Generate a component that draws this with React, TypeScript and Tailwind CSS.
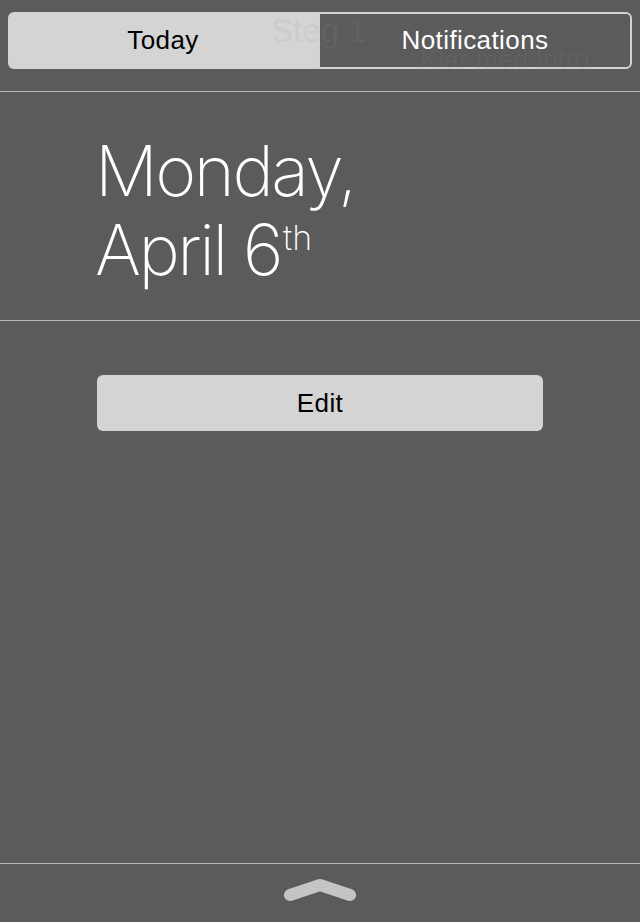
export default function App() {
    return (
        <div className="w-[640px] h-[922px] bg-[#5b5b5b] flex flex-col font-['Liberation_Sans',Arial,sans-serif] overflow-hidden">
            {/* segmented control */}
            <div className="relative px-2 pt-3 h-[91px]">
                <div className="flex h-[57px]">
                    <div className="flex-1 bg-[#d4d4d4] rounded-l-[6px] flex items-center justify-center text-[26px] tracking-[0.4px] text-black">
                        Today
                    </div>
                    <div className="flex-1 border-2 border-[#d2d2d2] rounded-r-[6px] flex items-center justify-center text-[26px] tracking-[0.4px] text-white">
                        Notifications
                    </div>
                </div>
                {/* blurred content showing through */}
                <div className="absolute left-[271px] top-[6px] text-[33px] text-[#999999]/15 pointer-events-none">Steg 1</div>
                <div className="absolute left-[420px] top-[40px] text-[27px] text-[#9a9a9a]/10 pointer-events-none">Klar med Intro</div>
            </div>
            <div className="h-px bg-[#b4b4b4]" />

            {/* date */}
            <div className="h-[228px] pl-[95px] pt-[39px] text-white font-['Inter',sans-serif] font-extralight text-[70px] leading-[79px] tracking-[-2.5px]">
                <div>Monday,</div>
                <div>
                    April 6
                    <span className="inline-block text-[34px] leading-none relative -top-[25px] ml-[2px] tracking-normal">th</span>
                </div>
            </div>
            <div className="h-px bg-[#b4b4b4]" />

            {/* widgets */}
            <div className="flex-1 pt-[54px] px-[97px]">
                <button className="w-full h-[56px] bg-[#d4d4d4] rounded-[6px] text-[26px] tracking-[0.4px] text-black">Edit</button>
            </div>

            <div className="h-px bg-[#b4b4b4]" />
            <div className="h-[58px] flex items-start justify-center pt-[12px]">
                <svg width="80" height="30" viewBox="0 0 80 30">
                    <path d="M10 19 L40 9 L70 19" fill="none" stroke="#c4c4c4" strokeWidth="12" strokeLinecap="round" strokeLinejoin="round" />
                </svg>
            </div>
        </div>
    )
}
